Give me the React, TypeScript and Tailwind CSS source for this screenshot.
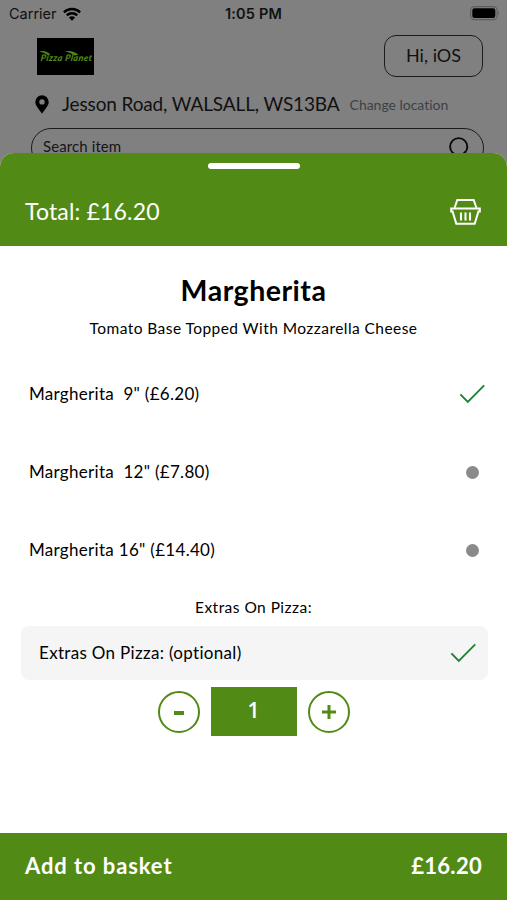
import React, { useState } from 'react';

interface SizeOption {
  id: string;
  label: string;
}

const OPTIONS: SizeOption[] = [
  { id: 'small', label: 'Margherita  9" (£6.20)' },
  { id: 'medium', label: 'Margherita  12" (£7.80)' },
  { id: 'large', label: 'Margherita 16" (£14.40)' },
];

const CheckMark: React.FC = () => (
  <svg width="26" height="20" viewBox="0 0 26 20" fill="none" stroke="#1f8434" strokeWidth="1.9">
    <path d="M1.4 10.3 L8.8 18 L25.2 1.3" />
  </svg>
);

const WifiIcon: React.FC = () => (
  <svg width="18" height="14" viewBox="0 0 18 14" fill="none" stroke="#000" strokeWidth="2.5">
    <path d="M0.9 5.3 A11.5 11.5 0 0 1 17.1 5.3" />
    <path d="M3.8 8.4 A7.4 7.4 0 0 1 14.2 8.4" />
    <path d="M9 13.8 L5.9 10.6 A4.4 4.4 0 0 1 12.1 10.6 Z" fill="#000" stroke="none" />
  </svg>
);

const BatteryIcon: React.FC = () => (
  <svg width="30" height="15" viewBox="0 0 30 15">
    <rect x="0.6" y="0.6" width="26.5" height="13" rx="3.8" fill="none" stroke="#5c5c5c" strokeWidth="1.1" />
    <rect x="2.3" y="2.3" width="23" height="9.6" rx="2.2" fill="#000" />
    <path d="M28.3 5 Q30.4 7.1 28.3 9.2 Z" fill="#5c5c5c" />
  </svg>
);

const PinIcon: React.FC = () => (
  <svg width="14" height="19" viewBox="0 0 14 19" fill="#000">
    <path fillRule="evenodd" d="M7 0.3 A6.7 6.7 0 0 0 0.3 7 C0.3 11 4.5 14.5 7 18.7 C9.5 14.5 13.7 11 13.7 7 A6.7 6.7 0 0 0 7 0.3 Z M7 4.2 A2.7 2.7 0 1 1 7 9.6 A2.7 2.7 0 1 1 7 4.2 Z" />
  </svg>
);

const SearchIcon: React.FC = () => (
  <svg width="22" height="22" viewBox="0 0 22 22" fill="none" stroke="#0a0a0a" strokeWidth="1.9">
    <circle cx="9.7" cy="9.7" r="8.6" />
    <path d="M15 15 L21 21" />
  </svg>
);

const BasketIcon: React.FC = () => (
  <svg className="mt-[2px]" width="32" height="28" viewBox="0 0 32 28" fill="none" stroke="#fff" strokeWidth="2">
    <path d="M4.6 9.8 L7.3 1.9 H23.7 L26.4 9.8" />
    <path d="M1.2 10.6 H29.8 V13.6 H28.4 L24.7 25.7 H6.3 L2.6 13.6 H1.2 Z" />
    <path d="M11 14.6 V22.4 M15.5 14.6 V22.4 M20 14.6 V22.4" strokeWidth="2.1" />
  </svg>
);

const Logo: React.FC = () => (
  <div className="relative flex h-[37px] w-[57px] items-center justify-center overflow-hidden bg-black">
    <span className="skew-x-[-8deg] pl-[2px] pt-[2px] font-['Lato',sans-serif] text-[9px] font-black italic leading-none tracking-[0.4px] whitespace-nowrap text-[#4f8a12]">
      Pizza Planet
    </span>
    <svg className="absolute left-0 top-0" width="57" height="37" viewBox="0 0 57 37" fill="#4f8a12">
      <path d="M2 13.4 Q9 12 13.5 16.6 L10.5 17 Q8 14.6 2 13.4 Z" />
      <path d="M28 13.2 Q36 11.8 41.5 16.8 L37.5 17.4 Q34 14.4 28 13.2 Z" />
    </svg>
  </div>
);

const App: React.FC = () => {
  const [selected, setSelected] = useState('small');
  const [quantity, setQuantity] = useState(1);

  return (
    <div className="relative h-[900px] w-full overflow-hidden bg-[#808080] font-['Lato',sans-serif] text-black [font-variant-ligatures:none]">
      <header className="flex flex-col">
        <div className="grid h-7 grid-cols-3 items-center pl-[9px] pr-[7px] font-['Inter',sans-serif] text-[14.5px] text-[#111]">
          <div className="flex items-center gap-[6px] pb-px">
            <span>Carrier</span>
            <WifiIcon />
          </div>
          <span className="pr-[2px] text-center text-[14.5px] font-semibold tracking-[0.15px]">1:05 PM</span>
          <div className="flex justify-end pb-[2px]">
            <BatteryIcon />
          </div>
        </div>

        <div className="flex items-center justify-between pl-[37px] pr-6 pt-[7px]">
          <Logo />
          <button className="h-[42px] w-[99px] rounded-[12px] border border-[#1c1c1c] pb-px text-[18px] text-[#111]">Hi, iOS</button>
        </div>

        <div className="flex h-[51px] items-center pl-[35px] pt-[4px]">
          <PinIcon />
          <span className="ml-[13px] text-[19px] tracking-[-0.13px] whitespace-nowrap text-[#111]">Jesson Road, WALSALL, WS13BA</span>
          <span className="ml-[10px] text-[14px] tracking-[-0.02px] whitespace-nowrap text-[#3c4146]">Change location</span>
        </div>

        <div className="mx-[31px] mr-[23px] flex h-[40px] items-center justify-between rounded-full border border-[#1c1c1c] pl-[11px] pr-[12px]">
          <span className="pb-[3px] text-[15px] tracking-[0.1px] text-[#151515]">Search item</span>
          <SearchIcon />
        </div>
      </header>

      {/* bottom sheet over the dimmed page */}
      <section className="absolute inset-x-0 bottom-0 top-[153px] flex flex-col overflow-hidden rounded-t-[14px] bg-white">
        <div className="flex h-[93px] flex-col bg-[#528a16] text-white">
          <div className="mt-[10px] h-[6px] w-[92px] shrink-0 self-center rounded-full bg-white" />
          <div className="flex items-center justify-between px-[25px] pt-[25px]">
            <span className="text-[23px] leading-[34px] tracking-[0.17px]">Total: £16.20</span>
            <BasketIcon />
          </div>
        </div>

        <h1 className="mt-[25px] text-center text-[28.5px] font-bold leading-[38px] tracking-[0.5px]">Margherita</h1>
        <p className="mt-[9px] text-center text-[15.5px] leading-5 tracking-[0.44px]">Tomato Base Topped With Mozzarella Cheese</p>

        <ul className="mt-[17px]">
          {OPTIONS.map(option => (
            <li
              key={option.id}
              onClick={() => setSelected(option.id)}
              className="flex h-[78px] items-center justify-between pl-[29px] pr-[22px]"
            >
              <span className="text-[17px] tracking-[0.3px] whitespace-pre">{option.label}</span>
              {selected === option.id ? <CheckMark /> : <span className="mr-[6px] h-[13px] w-[13px] rounded-full bg-[#8a8a8a]" />}
            </li>
          ))}
        </ul>

        <p className="mt-[8px] text-center text-[15.5px] leading-5 tracking-[0.46px]">Extras On Pizza:</p>
        <div className="ml-[21px] mr-[19px] mt-[9px] flex h-[54px] items-center justify-between rounded-lg bg-[#f5f5f5] pl-[18px] pr-[12px]">
          <span className="text-[17px] tracking-[0.32px]">Extras On Pizza: (optional)</span>
          <CheckMark />
        </div>

        <div className="mt-[7px] flex items-center justify-center gap-[11px]">
          <button
            onClick={() => setQuantity(q => Math.max(1, q - 1))}
            className="flex h-[42px] w-[42px] items-center justify-center rounded-full border-2 border-[#528a16]"
          >
            <span className="mt-[2px] h-[4px] w-[10px] bg-[#528a16]" />
          </button>
          <span className="flex h-[49px] w-[86px] items-center justify-center bg-[#528a16] pb-px font-['Open_Sans',sans-serif] text-[21px] font-semibold text-white">
            {quantity}
          </span>
          <button
            onClick={() => setQuantity(q => q + 1)}
            className="flex h-[42px] w-[42px] items-center justify-center rounded-full border-2 border-[#528a16]"
          >
            <svg width="14" height="14" viewBox="0 0 14 14" stroke="#528a16" strokeWidth="3">
              <path d="M0 7 H14 M7 0 V14" />
            </svg>
          </button>
        </div>

        <footer className="mt-auto flex h-[67px] items-center justify-between bg-[#528a16] px-[25px] pb-[2px] text-[22px] font-bold text-white">
          <span className="tracking-[0.9px]">Add to basket</span>
          <span className="tracking-[0.3px]">£16.20</span>
        </footer>
      </section>
    </div>
  );
};

export default App;
